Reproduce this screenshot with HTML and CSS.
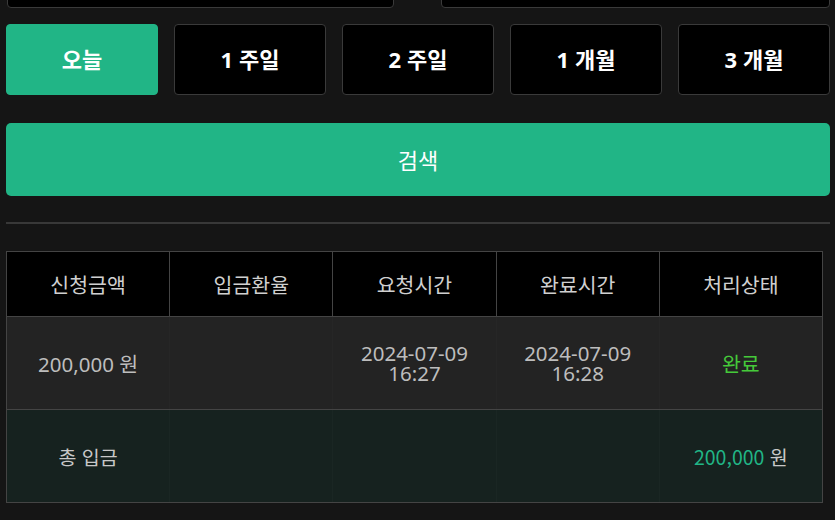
FILE: index.html
```html
<!DOCTYPE html>
<html lang="ko">

<head>
    <meta charset="UTF-8">
    <meta name="viewport" content="width=device-width, initial-scale=1.0">
    <title>입금내역</title>
    <link rel="stylesheet" href="styles.css">
</head>

<body>

    <div class="container">
        <div class="date-row">
            <input type="text" class="date-input">
            <input type="text" class="date-input">
        </div>

        <div class="periods">
            <button class="period active">오늘</button>
            <button class="period">1 주일</button>
            <button class="period">2 주일</button>
            <button class="period">1 개월</button>
            <button class="period">3 개월</button>
        </div>

        <button class="search">검색</button>

        <hr class="divider">

        <table class="history">
            <thead>
                <tr>
                    <th>신청금액</th>
                    <th>입금환율</th>
                    <th>요청시간</th>
                    <th>완료시간</th>
                    <th>처리상태</th>
                </tr>
            </thead>
            <tbody>
                <tr class="item">
                    <td>200,000 원</td>
                    <td></td>
                    <td class="time">2024-07-09<br>16:27</td>
                    <td class="time">2024-07-09<br>16:28</td>
                    <td class="done">완료</td>
                </tr>
                <tr class="total">
                    <td>총 입금</td>
                    <td></td>
                    <td></td>
                    <td></td>
                    <td><span class="sum">200,000</span> 원</td>
                </tr>
            </tbody>
        </table>
    </div>

</body>

</html>
```

FILE: styles.css
```css
body {
    font-family: 'Noto Sans', 'Noto Sans CJK KR', sans-serif;
    background-color: #151515;
    margin: 0;
    padding: 0;
    overflow: hidden;
}

.container {
    padding: 0 5px 0 6px;
}

.date-row {
    display: flex;
    gap: 47px;
    margin-top: -34px;
}

.date-input {
    width: 387px;
    height: 42px;
    box-sizing: border-box;
    background-color: #000;
    border: 1px solid #3a3a3a;
    border-radius: 4px;
    margin-left: 1px;
}

.date-input:last-child {
    width: 389px;
    margin-left: 0;
}

.periods {
    display: grid;
    grid-template-columns: repeat(5, 1fr);
    gap: 16px;
    margin-top: 16px;
}

.period {
    height: 71px;
    background-color: #000;
    border: 1px solid #3a3a3a;
    border-radius: 4px;
    color: #fff;
    font-family: 'Noto Sans', 'Noto Sans CJK KR', sans-serif;
    font-size: 22px;
    font-weight: bold;
    padding: 0 0 4px;
}

.period.active {
    background-color: #21b586;
    border-color: #21b586;
}

.search {
    display: block;
    width: 100%;
    height: 73px;
    margin-top: 28px;
    background-color: #21b586;
    border: none;
    border-radius: 5px;
    color: #fff;
    font-family: 'Noto Sans CJK KR', sans-serif;
    font-size: 22px;
    padding: 0 0 2px;
}

.divider {
    border: none;
    border-top: 2px solid #383838;
    margin: 26px 0 27px;
}

.history {
    border-collapse: collapse;
    width: 817px;
    table-layout: fixed;
}

.history th,
.history td {
    text-align: center;
    font-weight: normal;
    padding: 0;
}

.history th {
    height: 64px;
    background-color: #000;
    border: 1px solid #444;
    color: #d0d0d0;
    font-family: 'Noto Sans CJK KR', sans-serif;
    font-size: 20.5px;
}

.item td {
    height: 92px;
    background-color: #232323;
    border: 1px solid #444;
    border-left-color: #262626;
    border-right-color: #262626;
    color: #bdbdbd;
    font-size: 20.5px;
}

.item td.time {
    line-height: 20px;
}

.item td.done {
    color: #45c93a;
    font-family: 'Noto Sans CJK KR', sans-serif;
}

.total td {
    height: 92px;
    background-color: #16221f;
    border: 1px solid #444;
    border-left-color: #1a2623;
    border-right-color: #1a2623;
    color: #c8c8c8;
    font-family: 'Noto Sans CJK KR', sans-serif;
    font-size: 19.5px;
}

.item td:first-child,
.total td:first-child {
    border-left-color: #444;
}

.item td:last-child,
.total td:last-child {
    border-right-color: #444;
}

.sum {
    color: #21b586;
}
```
